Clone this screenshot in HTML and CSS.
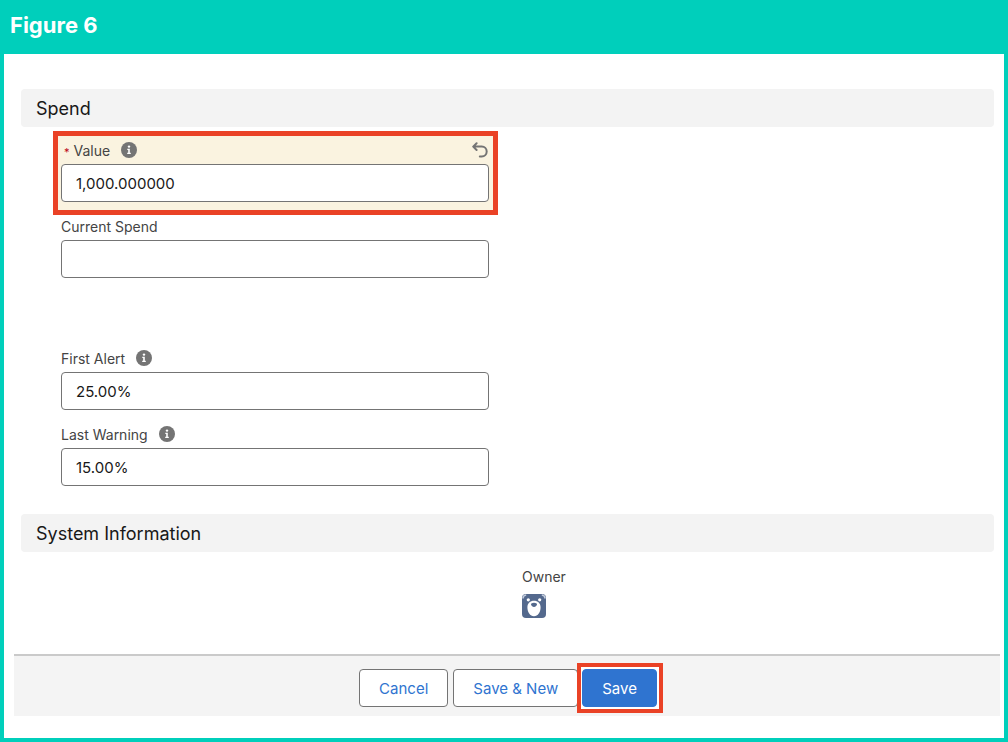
FILE: index.html
```html
<!DOCTYPE html>
<html lang="en">
<head>
    <meta charset="UTF-8">
    <meta name="viewport" content="width=device-width, initial-scale=1.0">
    <title>Figure 6</title>
    <link rel="stylesheet" href="styles.css">
</head>
<body>
    <svg class="sprite" aria-hidden="true">
        <symbol id="info" viewBox="0 0 16 16">
            <circle cx="8" cy="8" r="8" fill="#747474"/>
            <circle cx="8" cy="4.6" r="1.2" fill="#fff"/>
            <path d="M6.3 6.8h2.5v4h1v1.2H6.2v-1.2h1V8h-.9z" fill="#fff"/>
        </symbol>
    </svg>

    <header class="figure-header">
        <h1>Figure 6</h1>
    </header>

    <form class="panel">
        <h2 class="section-title">Spend</h2>
        <div class="columns">
            <div class="fields">
                <div class="field edited">
                    <div class="label-row required-row">
                        <label for="value"><span class="required">*</span> Value</label>
                        <svg class="info"><use href="#info"/></svg>
                        <button type="button" class="undo" aria-label="Undo">
                            <svg viewBox="0 0 16 16" fill="none" stroke="#747474" stroke-width="2" stroke-linecap="round" stroke-linejoin="round">
                                <path d="M4.6 1.2L1.2 4.6l3.4 3.4M1.5 4.6h8.3a4.9 4.9 0 0 1 0 9.8H7.8"/>
                            </svg>
                        </button>
                    </div>
                    <input type="text" id="value" value="1,000.000000">
                </div>
                <div class="field">
                    <div class="label-row">
                        <label for="current">Current Spend</label>
                    </div>
                    <input type="text" id="current">
                </div>
                <div class="field alerts">
                    <div class="label-row">
                        <label for="first">First Alert</label>
                        <svg class="info"><use href="#info"/></svg>
                    </div>
                    <input type="text" id="first" value="25.00%">
                </div>
                <div class="field">
                    <div class="label-row">
                        <label for="last">Last Warning</label>
                        <svg class="info"><use href="#info"/></svg>
                    </div>
                    <input type="text" id="last" value="15.00%">
                </div>
            </div>
        </div>

        <h2 class="section-title">System Information</h2>
        <div class="columns owner-row">
            <div class="owner">
                <div class="label-row">Owner</div>
                <svg class="avatar" viewBox="0 0 24 24">
                    <rect width="24" height="24" rx="4" fill="#54698d"/>
                    <path d="M1 4.5A3.5 3.5 0 0 1 4.2 1M19.8 1A3.5 3.5 0 0 1 23 4.5" fill="none" stroke="#c3ccdc" stroke-width="1.6"/>
                    <circle cx="6.3" cy="5.8" r="1.6" fill="#fff"/>
                    <circle cx="17.7" cy="5.8" r="1.6" fill="#fff"/>
                    <path d="M12 6.8c3.8 0 6.6 2.7 6.6 6.4 0 4.7-2.7 9-6.6 9s-6.6-4.3-6.6-9c0-3.7 2.8-6.4 6.6-6.4z" fill="#fff"/>
                    <path d="M12 8.8c1.8 0 3 .7 3 1.7s-1.5 2.4-3 2.4-3-1.4-3-2.4 1.2-1.7 3-1.7z" fill="#54698d"/>
                </svg>
            </div>
        </div>

        <div class="actions">
            <button type="button" class="btn">Cancel</button>
            <button type="button" class="btn">Save &amp; New</button>
            <div class="marked">
                <button type="submit" class="btn primary">Save</button>
            </div>
        </div>
    </form>
</body>
</html>
```

FILE: styles.css
```css
* {
    box-sizing: border-box;
}
body {
    margin: 0;
    padding: 0 4px 4px;
    background: #00cfbb;
    color: #444;
    font-family: Inter, "Liberation Sans", sans-serif;
    font-size: 14px;
}
.sprite {
    display: none;
}
.figure-header {
    height: 54px;
    padding: 10px 6px;
}
.figure-header h1 {
    margin: 0;
    color: #fff;
    font-size: 22px;
    line-height: 30px;
    font-weight: 700;
}
.panel {
    padding: 35px 0 22px;
    background: #fff;
}
.section-title {
    margin: 0 10px 0 17px;
    padding: 2px 15px 0;
    background: #f3f3f3;
    border-radius: 4px;
    color: #181818;
    font-size: 18px;
    line-height: 36px;
    font-weight: 400;
}
.columns {
    display: grid;
    grid-template-columns: 1fr 1fr;
    column-gap: 33px;
    margin: 0 54px 0 57px;
}
.fields {
    display: flex;
    flex-direction: column;
    gap: 14px;
    padding: 4px 0 28px;
}
/* Changed field, with its red frame */
.edited {
    margin: 0 -9px -13px -8px;
    padding: 4px 4px 8px 3px;
    background: #faf3e0;
    border: 5px solid #ea4226;
}
.alerts {
    margin-top: 56px;
}
.label-row {
    display: flex;
    align-items: center;
    height: 20px;
    margin-bottom: 4px;
}
.required-row {
    padding: 0 1px 0 3px;
}
.required {
    color: #ba0517;
    font-size: 11px;
}
.info {
    width: 16px;
    height: 16px;
    margin-left: 11px;
}
.undo {
    margin-left: auto;
    padding: 0;
    border: 0;
    background: none;
    cursor: pointer;
}
.undo svg {
    display: block;
    width: 16px;
    height: 16px;
}
.field input {
    display: block;
    width: 100%;
    height: 38px;
    padding: 0 14px;
    border: 1px solid #747474;
    border-radius: 4px;
    background: #fff;
    color: #181818;
    font: inherit;
    font-size: 15px;
}
.owner-row {
    padding: 14px 0 36px;
}
.owner {
    grid-column: 2;
}
.avatar {
    display: block;
    width: 24px;
    height: 24px;
}
.owner .label-row {
    margin-bottom: 8px;
}
.actions {
    display: flex;
    align-items: center;
    justify-content: center;
    margin: 0 4px 0 10px;
    padding: 7px 0 3px 8px;
    background: #f4f4f4;
    border-top: 2px solid #cacaca;
}
.btn {
    height: 38px;
    margin-right: 5px;
    padding: 0 19px;
    border: 1px solid #747474;
    border-radius: 4px;
    background: #fff;
    color: #2f74d0;
    font: inherit;
    font-size: 15px;
    cursor: pointer;
}
.marked {
    position: relative;
    margin-left: -6px;
    padding: 2px 2px 2px 1px;
    border: 4px solid #ea4226;
    background: #fff;
}
.primary {
    display: block;
    margin: 0;
    border-color: #2f74d0;
    background: #2f74d0;
    color: #fff;
}
```
